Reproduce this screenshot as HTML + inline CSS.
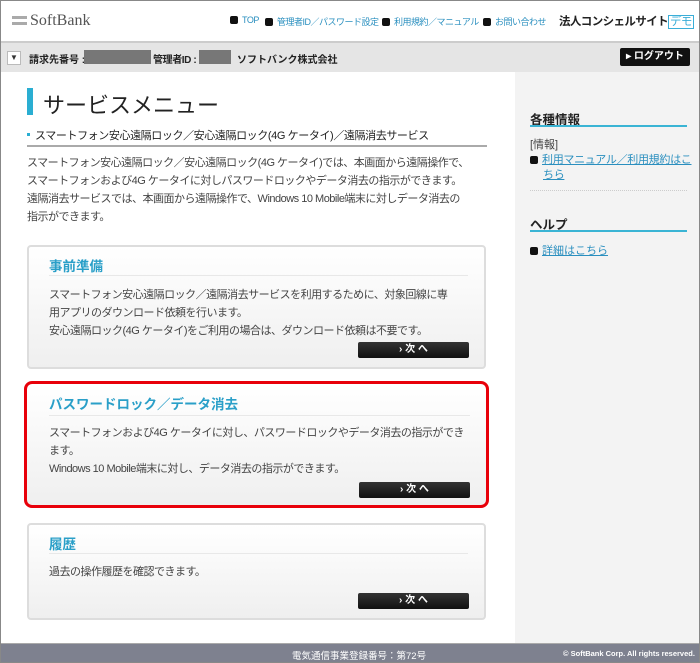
<!DOCTYPE html>
<html><head><meta charset="utf-8"><style>
*{margin:0;padding:0;box-sizing:border-box}
body{width:700px;height:663px;position:relative;overflow:hidden;background:#fff;font-family:"Liberation Sans","Noto Sans CJK JP",sans-serif;color:#333}
.a{position:absolute;white-space:nowrap}
.frame{position:absolute;left:0;top:0;width:700px;height:663px;border:1px solid #888;pointer-events:none}
.nav{font-size:9px;color:#2a8fbf;top:15px;letter-spacing:-0.5px}
.bul{display:inline-block;width:8px;height:8px;background:#111;border-radius:2px;margin-right:4px;vertical-align:-1px}
.box{position:absolute;border:2px solid #ddd;border-radius:4px;background:linear-gradient(#fff,#efefef)}
.box h3{position:absolute;left:20px;top:8px;font-size:13.5px;color:#2a9fc8;font-weight:bold;white-space:nowrap}
.box .sep{position:absolute;left:20px;right:16px;top:28px;border-top:1px solid #e8e8e8}
.box p{position:absolute;left:20px;font-size:11px;letter-spacing:-0.5px;line-height:18px;color:#444;white-space:nowrap}
.btn{position:absolute;width:111px;height:16px;background:linear-gradient(#333,#111);border-radius:2px;color:#fff;font-size:10px;font-weight:bold;text-align:center;line-height:16px}
.p{font-size:11px;letter-spacing:-0.5px;line-height:18px;color:#444}
</style></head><body>
<div class="a" style="left:12px;top:16px;width:15px;height:3px;background:#aaa"></div>
<div class="a" style="left:12px;top:22px;width:15px;height:3px;background:#aaa"></div>
<div class="a" style="left:30px;top:12px;font-size:16px;color:#555;font-family:'Liberation Serif',serif">SoftBank</div>
<div class="a nav" style="left:230px"><span class="bul"></span>TOP</div>
<div class="a nav" style="left:265px"><span class="bul"></span>管理者ID／パスワード設定</div>
<div class="a nav" style="left:382px"><span class="bul"></span>利用規約／マニュアル</div>
<div class="a nav" style="left:483px"><span class="bul"></span>お問い合わせ</div>
<div class="a" style="left:559px;top:13px;font-size:11.5px;letter-spacing:-0.6px;font-weight:bold;color:#222">法人コンシェルサイト<span style="color:#3aaed8;border:1px solid #3aaed8;padding:0 1px;font-weight:normal">デモ</span></div>
<div class="a" style="left:0;top:41px;width:700px;height:31px;background:#e5e5e5;border-top:2px solid #ccc"></div>
<div class="a" style="left:7px;top:51px;width:14px;height:14px;background:#fff;border:1px solid #bbb;font-size:8px;text-align:center;line-height:12px">▼</div>
<div class="a" style="left:29px;top:51px;font-size:10px;font-weight:bold;color:#222">請求先番号 :</div>
<div class="a" style="left:84px;top:50px;width:67px;height:14px;background:#777"></div>
<div class="a" style="left:153px;top:51px;font-size:10px;letter-spacing:-0.4px;font-weight:bold;color:#222">管理者ID :</div>
<div class="a" style="left:199px;top:50px;width:32px;height:14px;background:#777"></div>
<div class="a" style="left:237px;top:51px;font-size:10px;font-weight:bold;color:#222">ソフトバンク株式会社</div>
<div class="a" style="left:620px;top:48px;width:70px;height:18px;background:#111;border-radius:2px;color:#fff;font-size:10px;font-weight:bold;line-height:18px;text-align:center">▸ ログアウト</div>
<div class="a" style="left:515px;top:72px;width:185px;height:571px;background:#f3f3f3"></div>
<div class="a" style="left:27px;top:88px;width:6px;height:27px;background:#2aaed2"></div>
<div class="a" style="left:43px;top:88px;font-size:22px;color:#222">サービスメニュー</div>
<div class="a" style="left:27px;top:133px;width:3px;height:3px;background:#2aaed2"></div>
<div class="a" style="left:35px;top:127px;font-size:11px;letter-spacing:-0.4px;color:#222">スマートフォン安心遠隔ロック／安心遠隔ロック(4G ケータイ)／遠隔消去サービス</div>
<div class="a" style="left:27px;top:145px;width:460px;height:2px;background:#aaa"></div>
<div class="a p" style="left:27px;top:154px">スマートフォン安心遠隔ロック／安心遠隔ロック(4G ケータイ)では、本画面から遠隔操作で、<br>スマートフォンおよび4G ケータイに対しパスワードロックやデータ消去の指示ができます。<br>遠隔消去サービスでは、本画面から遠隔操作で、Windows 10 Mobile端末に対しデータ消去の<br>指示ができます。</div>
<div class="box" style="left:27px;top:245px;width:459px;height:124px">
<h3>事前準備</h3><div class="sep"></div>
<p style="top:39px">スマートフォン安心遠隔ロック／遠隔消去サービスを利用するために、対象回線に専<br>用アプリのダウンロード依頼を行います。<br>安心遠隔ロック(4G ケータイ)をご利用の場合は、ダウンロード依頼は不要です。</p>
<div class="btn" style="left:329px;top:95px">› 次 へ</div></div>
<div class="box" style="left:24px;top:381px;width:465px;height:127px;border:3px solid #e8000a;border-radius:8px">
<h3 style="left:22px;top:9px">パスワードロック／データ消去</h3><div class="sep" style="left:22px;top:31px"></div>
<p style="left:22px;top:40px">スマートフォンおよび4G ケータイに対し、パスワードロックやデータ消去の指示ができ<br>ます。<br>Windows 10 Mobile端末に対し、データ消去の指示ができます。</p>
<div class="btn" style="left:332px;top:98px">› 次 へ</div></div>
<div class="box" style="left:27px;top:523px;width:459px;height:97px">
<h3>履歴</h3><div class="sep"></div>
<p style="top:38px">過去の操作履歴を確認できます。</p>
<div class="btn" style="left:329px;top:68px">› 次 へ</div></div>
<div class="a" style="left:530px;top:109px;font-size:12.5px;font-weight:bold;color:#222">各種情報</div>
<div class="a" style="left:530px;top:125px;width:157px;height:2px;background:#3ab4d4"></div>
<div class="a" style="left:530px;top:136px;font-size:11px;color:#444">[情報]</div>
<div class="a" style="left:530px;top:153px;font-size:11px;letter-spacing:-0.3px;color:#2a8fbf;line-height:15px;text-decoration:underline"><span class="bul" style="text-decoration:none"></span>利用マニュアル／利用規約はこ<br><span style="margin-left:13px">ちら</span></div>
<div class="a" style="left:530px;top:190px;width:157px;border-top:1px dotted #ccc"></div>
<div class="a" style="left:530px;top:214px;font-size:12.5px;font-weight:bold;color:#222">ヘルプ</div>
<div class="a" style="left:530px;top:230px;width:157px;height:2px;background:#3ab4d4"></div>
<div class="a" style="left:530px;top:242px;font-size:11px;color:#2a8fbf;text-decoration:underline"><span class="bul"></span>詳細はこちら</div>
<div class="a" style="left:0;top:643px;width:700px;height:20px;background:#7e818f;border-top:1px solid #aaa"></div>
<div class="a" style="left:292px;top:648px;font-size:9.5px;color:#fff">電気通信事業登録番号：第72号</div>
<div class="a" style="left:563px;top:649px;font-size:7.5px;color:#fff;font-weight:bold">© SoftBank Corp. All rights reserved.</div>
<div class="frame"></div>
</body></html>
